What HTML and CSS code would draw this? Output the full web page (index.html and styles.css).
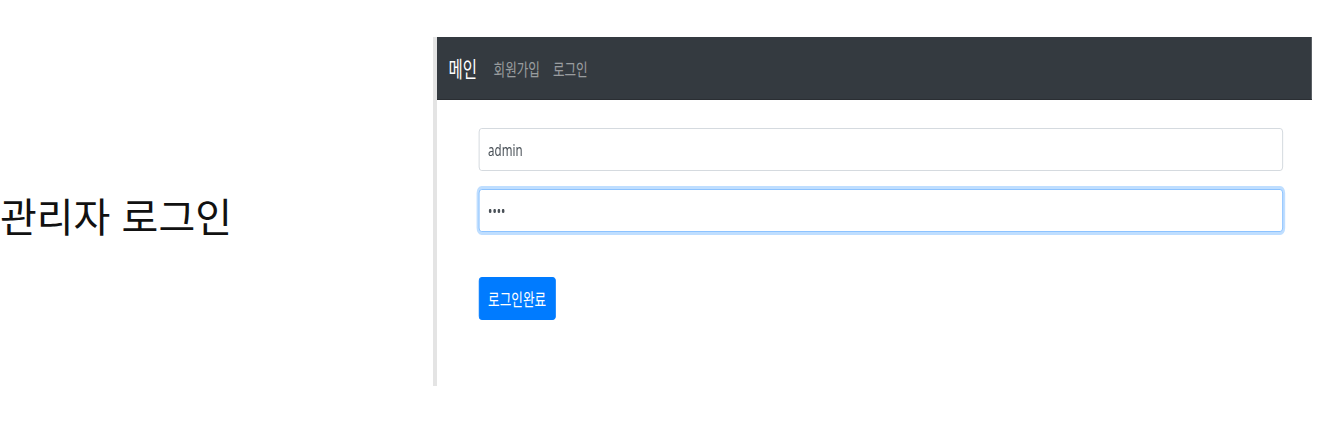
FILE: index.html
```html
<!DOCTYPE html>
<html lang="ko">
<head>
<meta charset="utf-8">
<title>관리자 로그인</title>
<link rel="stylesheet" href="styles.css">
</head>
<body>
<div class="page">
  <div class="side">
    <h1 class="title">관리자 로그인</h1>
  </div>
  <div class="frame">
    <div class="viewport">
      <nav class="navbar">
        <a class="brand" href="#">메인</a>
        <a class="nav-link" href="#">회원가입</a>
        <a class="nav-link" href="#">로그인</a>
      </nav>
      <form class="login-form">
        <input class="form-control" type="text" value="admin">
        <input class="form-control is-focus" type="password" value="1234">
        <button class="btn" type="button">로그인완료</button>
      </form>
    </div>
  </div>
</div>
</body>
</html>
```
FILE: styles.css
```css
html, body {
  margin: 0;
  padding: 0;
  background: #fff;
  overflow: hidden;
}
body {
  font-family: "Noto Sans CJK KR", "Noto Sans", sans-serif;
}
.page {
  display: flex;
  padding-top: 37px;
  width: 1342px;
  height: 432px;
  box-sizing: border-box;
}
.side {
  width: 433px;
  flex: none;
  padding-top: 158px;
  box-sizing: border-box;
}
.title {
  margin: 0;
  font-weight: 400;
  font-size: 40px;
  line-height: 1;
  color: #111;
  white-space: nowrap;
}
.frame {
  width: 879px;
  height: 349px;
  flex: none;
  box-sizing: border-box;
  border-left: 4px solid #bdbdbd;
  border-image: linear-gradient(to right, #e4e4e4 0, #d8d8d8 50%, #a9a9a9 100%) 1;
  overflow: hidden;
}
.viewport {
  width: 1215px;
  height: 100%;
  transform: scaleX(0.72);
  transform-origin: left top;
}
.navbar {
  height: 63px;
  box-sizing: border-box;
  background: #343a40;
  border-bottom: 1px solid #2a2e33;
  display: flex;
  align-items: center;
  padding: 0 16px;
}
.navbar a { text-decoration: none; white-space: nowrap; }
.brand {
  color: #fff;
  font-size: 21.5px;
  margin-right: 14px;
  line-height: 1.5;
  padding-top: 1px;
}
.nav-link {
  color: rgba(255, 255, 255, 0.5);
  font-size: 17.5px;
  padding: 2px 9px 0;
  line-height: 1.5;
}
.login-form {
  display: flex;
  flex-direction: column;
  align-items: flex-start;
  padding: 28px 40px 0 58px;
}
.form-control {
  width: 100%;
  height: 43px;
  box-sizing: border-box;
  padding: 0 12px;
  font-family: "Noto Sans", sans-serif;
  font-size: 16px;
  color: #495057;
  background: #fff;
  border: 1px solid #ced4da;
  border-left-width: 1.4px;
  border-right-width: 1.4px;
  border-radius: 4px / 4px;
  outline: none;
}
.form-control + .form-control { margin-top: 18px; }
.is-focus {
  border-color: #80bdff;
  box-shadow: 0 0 0 3px rgba(0, 123, 255, 0.25);
}
.btn {
  margin-top: 45px;
  height: 43px;
  padding: 0 12px;
  font-family: "Noto Sans CJK KR", sans-serif;
  font-size: 17.5px;
  color: #fff;
  background: #007bff;
  border: 1px solid #007bff;
  border-radius: 5px / 4px;
  cursor: pointer;
}
```
